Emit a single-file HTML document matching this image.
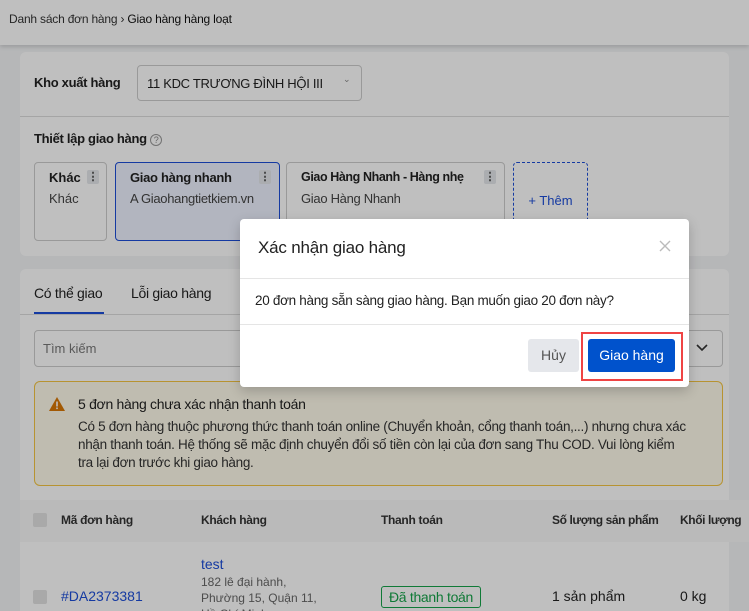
<!DOCTYPE html>
<html style="width:749px;height:611px;overflow:hidden"><head><meta charset="utf-8"><style>
*{box-sizing:border-box;margin:0;padding:0}
body{width:749px;height:611px;overflow:hidden;position:relative;background:#f3f4f6;font-family:"Liberation Sans",sans-serif;font-size:13px;color:#222}
.a{position:absolute}
.hdr{left:0;top:0;width:749px;height:45px;background:#fff;box-shadow:0 2px 4px rgba(0,0,0,.15)}
.card{background:#fff;border-radius:6px}
.sc{border:1px solid #ccc;border-radius:4px}
.dots{position:absolute;width:12px;height:14px;background:#e5e7eb;border-radius:2px;font-weight:bold;font-size:11px;text-align:center;line-height:14px;color:#444}
b{font-weight:bold}
.ov{left:0;top:0;width:749px;height:611px;background:rgba(0,0,0,.25)}
</style></head><body>
<div class="a hdr"><div class="a" style="left:9px;top:12px;font-size:12px;color:#333;letter-spacing:-0.2px">Danh sách đơn hàng › <span style="color:#111">Giao hàng hàng loạt</span></div></div>
<div class="a card" style="left:20px;top:52px;width:709px;height:204px"></div>
<div class="a" style="left:34px;top:75px;font-weight:bold;letter-spacing:-0.3px">Kho xuất hàng</div>
<div class="a sc" style="left:137px;top:65px;width:225px;height:36px"><span class="a" style="left:9px;top:10px;letter-spacing:-0.3px">11 KDC TRƯƠNG ĐÌNH HỘI III</span><span class="a" style="left:205px;top:8px;font-size:9px;color:#888">⌄</span></div>
<div class="a" style="left:20px;top:116px;width:709px;height:1px;background:#ddd"></div>
<div class="a" style="left:34px;top:131px;font-weight:bold;letter-spacing:-0.3px">Thiết lập giao hàng <span style="font-weight:normal;color:#888;border:1px solid #999;border-radius:50%;display:inline-block;width:12px;height:12px;line-height:10px;text-align:center;font-size:9px">?</span></div>
<div class="a sc" style="left:34px;top:162px;width:73px;height:79px"><b class="a" style="left:14px;top:7px">Khác</b><span class="a" style="left:14px;top:28px;color:#444">Khác</span><div class="dots" style="left:52px;top:7px">⋮</div></div>
<div class="a" style="left:115px;top:162px;width:165px;height:79px;border:1px solid #1d4ed8;border-radius:4px;background:#eef2ff"><b class="a" style="left:14px;top:7px;letter-spacing:-0.3px">Giao hàng nhanh</b><span class="a" style="left:14px;top:28px;color:#444;letter-spacing:-0.3px">A Giaohangtietkiem.vn</span><div class="dots" style="left:143px;top:7px">⋮</div></div>
<div class="a sc" style="left:286px;top:162px;width:219px;height:79px"><b class="a" style="left:14px;top:7px;letter-spacing:-0.4px;font-size:12.5px">Giao Hàng Nhanh - Hàng nhẹ</b><span class="a" style="left:14px;top:28px;color:#444;letter-spacing:-0.3px">Giao Hàng Nhanh</span><div class="dots" style="left:197px;top:7px">⋮</div></div>
<div class="a" style="left:513px;top:162px;width:75px;height:79px;border:1px dashed #1d4ed8;border-radius:4px;color:#1d4ed8;text-align:center;line-height:76px">+ Thêm</div>
<div class="a card" style="left:20px;top:269px;width:709px;height:350px"></div>
<div class="a" style="left:34px;top:285px;font-size:14px;letter-spacing:-0.3px">Có thể giao</div>
<div class="a" style="left:131px;top:285px;font-size:14px;letter-spacing:-0.3px">Lỗi giao hàng</div>
<div class="a" style="left:34px;top:312px;width:70px;height:2px;background:#1d4ed8"></div>
<div class="a" style="left:20px;top:314px;width:709px;height:1px;background:#ddd"></div>
<div class="a sc" style="left:34px;top:330px;width:689px;height:37px"><span class="a" style="left:8px;top:10px;color:#777">Tìm kiếm</span><svg class="a" style="left:661px;top:13px" width="12" height="8" viewBox="0 0 12 8"><path d="M1 1l5 5 5-5" stroke="#333" stroke-width="1.6" fill="none"/></svg></div>
<div class="a" style="left:34px;top:381px;width:689px;height:105px;border:1px solid #f5c542;border-radius:6px;background:#fffbeb"></div>
<svg class="a" style="left:49px;top:397px" width="16" height="14" viewBox="0 0 16 14"><path d="M8 0L16 14H0Z" fill="#d97706"/><rect x="7.2" y="4.5" width="1.6" height="5" fill="#fff"/><rect x="7.2" y="10.5" width="1.6" height="1.6" fill="#fff"/></svg>
<div class="a" style="left:78px;top:396px;font-size:14px;letter-spacing:-0.3px">5 đơn hàng chưa xác nhận thanh toán</div>
<div class="a" style="left:78px;top:418px;width:640px;font-size:13.5px;line-height:18px;color:#333;letter-spacing:-0.3px;white-space:nowrap">Có 5 đơn hàng thuộc phương thức thanh toán online (Chuyển khoản, cổng thanh toán,...) nhưng chưa xác<br>nhận thanh toán. Hệ thống sẽ mặc định chuyển đổi số tiền còn lại của đơn sang Thu COD. Vui lòng kiểm<br>tra lại đơn trước khi giao hàng.</div>
<div class="a" style="left:20px;top:500px;width:729px;height:42px;background:#f8f8f8"></div>
<div class="a" style="left:33px;top:513px;width:14px;height:14px;background:#e2e2e2;border-radius:2px"></div>
<div class="a" style="left:61px;top:513px;font-size:12px;font-weight:bold;color:#333;letter-spacing:-0.3px">Mã đơn hàng</div>
<div class="a" style="left:201px;top:513px;font-size:12px;font-weight:bold;color:#333;letter-spacing:-0.3px">Khách hàng</div>
<div class="a" style="left:381px;top:513px;font-size:12px;font-weight:bold;color:#333;letter-spacing:-0.3px">Thanh toán</div>
<div class="a" style="left:552px;top:513px;font-size:12px;font-weight:bold;color:#333;letter-spacing:-0.4px">Số lượng sản phẩm</div>
<div class="a" style="left:680px;top:513px;font-size:12px;font-weight:bold;color:#333;letter-spacing:-0.4px">Khối lượng</div>
<div class="a" style="left:33px;top:590px;width:14px;height:14px;background:#e2e2e2;border-radius:2px"></div>
<div class="a" style="left:61px;top:588px;font-size:14px;color:#1d4ed8">#DA2373381</div>
<div class="a" style="left:201px;top:556px;font-size:14px;color:#1d4ed8">test</div>
<div class="a" style="left:201px;top:574px;font-size:12px;line-height:16px;color:#666">182 lê đại hành,<br>Phường 15, Quận 11,<br>Hồ Chí Minh</div>
<div class="a" style="left:381px;top:586px;width:100px;height:22px;border:1px solid #16a34a;border-radius:3px;color:#16a34a;font-size:14px;text-align:center;line-height:20px;letter-spacing:-0.3px">Đã thanh toán</div>
<div class="a" style="left:552px;top:588px;font-size:14px">1 sản phẩm</div>
<div class="a" style="left:680px;top:588px;font-size:14px">0 kg</div>
<div class="a ov"></div>
<div class="a" style="left:240px;top:219px;width:449px;height:168px;background:#fff;border-radius:4px;box-shadow:0 4px 12px rgba(0,0,0,.2)">
<div class="a" style="left:18px;top:19px;font-size:17px;color:#222;letter-spacing:-0.2px">Xác nhận giao hàng</div>
<svg class="a" style="left:419px;top:21px" width="12" height="12" viewBox="0 0 12 12"><path d="M1 1l10 10M11 1L1 11" stroke="#bbb" stroke-width="1.4"/></svg>
<div class="a" style="left:0;top:59px;width:449px;height:1px;background:#e5e5e5"></div>
<div class="a" style="left:15px;top:74px;font-size:13.5px;color:#222;letter-spacing:-0.3px">20 đơn hàng sẵn sàng giao hàng. Bạn muốn giao 20 đơn này?</div>
<div class="a" style="left:0;top:105px;width:449px;height:1px;background:#e5e5e5"></div>
<div class="a" style="left:288px;top:120px;width:51px;height:33px;background:#e5e7eb;border-radius:3px;color:#555;text-align:center;line-height:33px;font-size:14px">Hủy</div>
<div class="a" style="left:341px;top:113px;width:102px;height:49px;border:2px solid #ef4444"></div>
<div class="a" style="left:348px;top:120px;width:87px;height:33px;background:#0052cc;border-radius:3px;color:#fff;text-align:center;line-height:33px;font-size:14px">Giao hàng</div>
</div>
</body></html>
